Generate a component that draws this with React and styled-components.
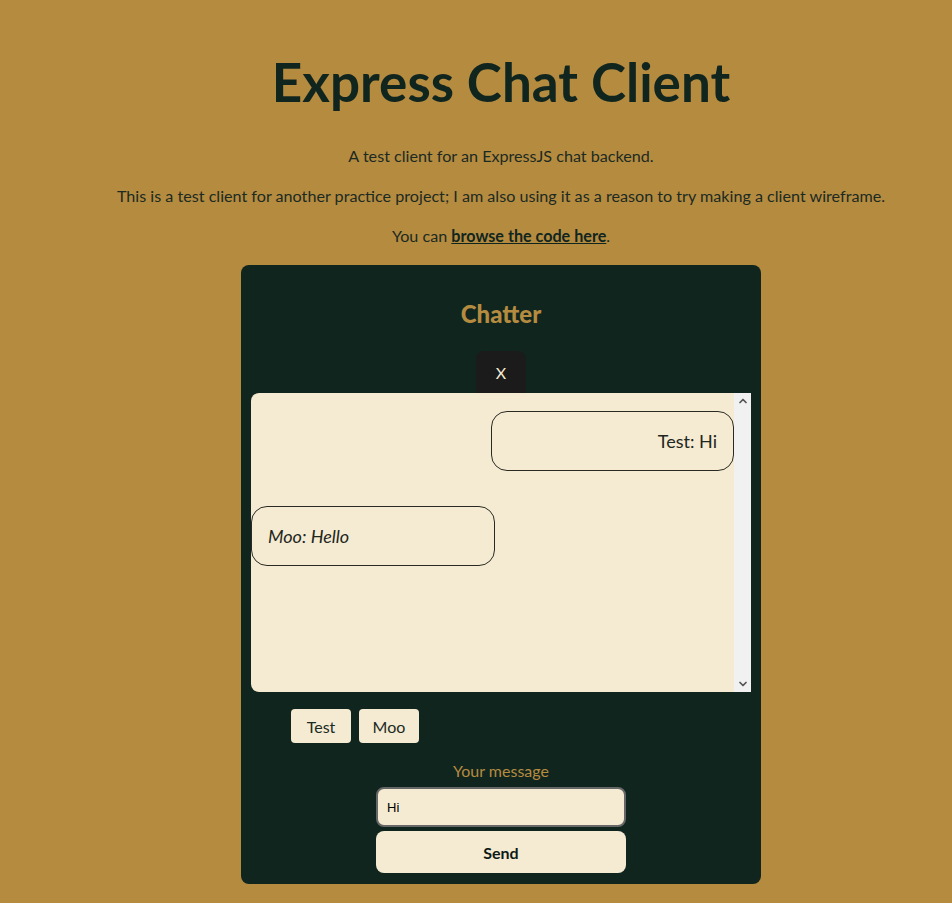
import React, { useState } from 'react';
import styled, { createGlobalStyle } from 'styled-components';
import { ChevronUp, ChevronDown } from 'lucide-react';

const GlobalStyle = createGlobalStyle`
  body {
    margin: 0;
    background-color: #b58b40;
    font-family: Lato, "Segoe UI", sans-serif;
    color: #1b2a22;
  }
`;

const Page = styled.main`
  display: flex;
  flex-direction: column;
  align-items: center;
  padding: 50px 0 0 50px;
  text-align: center;
`;

const Title = styled.h1`
  margin: 0 0 30px;
  font-size: 53px;
  line-height: 64px;
  font-weight: 700;
  color: #11251f;
`;

const Blurb = styled.p`
  margin: 0 0 16px;
  font-size: 16.15px;
  line-height: 24px;
  color: #1b2a22;

  a {
    color: #11251f;
    font-weight: 700;
  }
`;

const Card = styled.section`
  width: 520px;
  box-sizing: border-box;
  margin-top: 1px;
  padding: 10px 10px 11px;
  background-color: #11251f;
  border-radius: 8px;
  display: flex;
  flex-direction: column;
  align-items: center;
`;

const CardTitle = styled.h2`
  margin: 24px 0 23px;
  font-size: 24px;
  line-height: 29px;
  font-weight: 900;
  color: #b58b40;
`;

const CloseButton = styled.button`
  width: 50px;
  height: 42px;
  border: none;
  border-radius: 8px 8px 0 0;
  background-color: #1b1b1b;
  color: #f5ebd3;
  font-family: Lato, sans-serif;
  font-size: 16px;
  cursor: pointer;
`;

const ChatBox = styled.div`
  align-self: stretch;
  height: 299px;
  display: flex;
  background-color: #f5ebd3;
  border-radius: 8px 0 0 8px;
  overflow: hidden;
`;

const MessageList = styled.div`
  flex: 1;
  display: flex;
  flex-direction: column;
  gap: 35px;
  padding-top: 18px;
  overflow: hidden;
`;

const Bubble = styled.div`
  width: calc(50% + 2px);
  box-sizing: border-box;
  align-self: ${p => (p.$mine ? 'flex-end' : 'flex-start')};
  padding: 16px;
  border: 1px solid #2a2a22;
  border-radius: 16px;
  font-size: 18px;
  line-height: 26px;
  color: #1e2620;
  text-align: ${p => (p.$mine ? 'right' : 'left')};
  font-style: ${p => (p.$mine ? 'normal' : 'italic')};
`;

const ScrollRail = styled.div`
  width: 17px;
  display: flex;
  flex-direction: column;
  justify-content: space-between;
  align-items: center;
  padding: 2px 0;
  background-color: #f1f1f1;
  color: #555;
`;

const UserRow = styled.div`
  align-self: stretch;
  display: flex;
  gap: 8px;
  padding: 17px 40px 0;
`;

const UserButton = styled.button`
  width: 60px;
  height: 34px;
  border: none;
  border-radius: 4px;
  background-color: #f5ebd3;
  color: #1b2a22;
  font-family: Lato, sans-serif;
  font-size: 16px;
  cursor: pointer;
`;

const Form = styled.form`
  display: flex;
  flex-direction: column;
  align-items: center;
  gap: 4px;
  margin-top: 18px;
`;

const Label = styled.label`
  font-size: 16px;
  line-height: 20px;
  color: #b58b40;
  margin-bottom: 2px;
`;

const Input = styled.input`
  width: 250px;
  height: 40px;
  box-sizing: border-box;
  padding: 0 9px;
  border: 2px solid #676767;
  border-radius: 8px;
  background-color: #f5ebd3;
  color: #000;
  font-family: "Liberation Sans", Arial, sans-serif;
  font-size: 13px;
  outline: none;
`;

const SendButton = styled.button`
  width: 250px;
  height: 42px;
  border: none;
  border-radius: 8px;
  background-color: #f5ebd3;
  color: #0d1a15;
  font-family: Lato, sans-serif;
  font-size: 16px;
  font-weight: 700;
  cursor: pointer;
`;

const messages = [
  { id: 1, user: 'Test', text: 'Hi' },
  { id: 2, user: 'Moo', text: 'Hello' },
];

export default function App() {
  const [me, setMe] = useState('Test');
  const [draft, setDraft] = useState('Hi');

  return (
    <>
      <GlobalStyle />
      <Page>
        <Title>Express Chat Client</Title>
        <Blurb>A test client for an ExpressJS chat backend.</Blurb>
        <Blurb>
          This is a test client for another practice project; I am also using it as a reason to try making a client
          wireframe.
        </Blurb>
        <Blurb>
          You can <a href="#code">browse the code here</a>.
        </Blurb>

        <Card>
          <CardTitle>Chatter</CardTitle>
          <CloseButton type="button">X</CloseButton>
          <ChatBox>
            <MessageList>
              {messages.map(m => (
                <Bubble key={m.id} $mine={m.user === me}>
                  {m.user}: {m.text}
                </Bubble>
              ))}
            </MessageList>
            <ScrollRail>
              <ChevronUp size={12} strokeWidth={3.5} />
              <ChevronDown size={12} strokeWidth={3.5} />
            </ScrollRail>
          </ChatBox>

          <UserRow>
            {['Test', 'Moo'].map(u => (
              <UserButton key={u} type="button" onClick={() => setMe(u)}>
                {u}
              </UserButton>
            ))}
          </UserRow>

          <Form onSubmit={e => e.preventDefault()}>
            <Label htmlFor="msg">Your message</Label>
            <Input id="msg" value={draft} onChange={e => setDraft(e.target.value)} />
            <SendButton type="submit">Send</SendButton>
          </Form>
        </Card>
      </Page>
    </>
  );
}
